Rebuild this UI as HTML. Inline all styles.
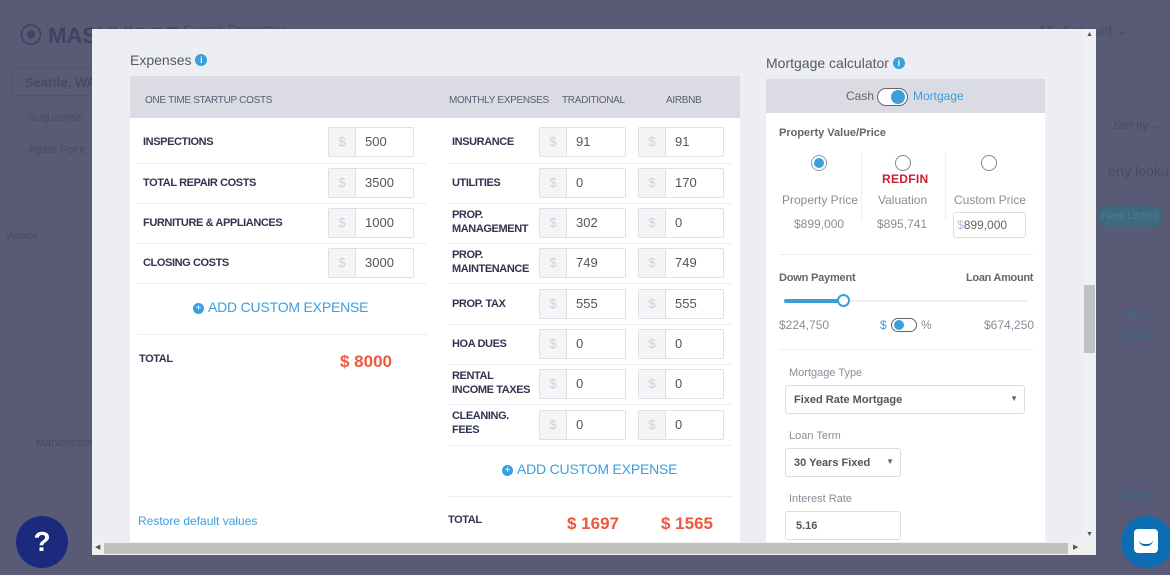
<!DOCTYPE html>
<html><head><meta charset="utf-8"><style>
*{box-sizing:border-box;margin:0;padding:0}
body{width:1170px;height:575px;overflow:hidden;background:#585a76;font-family:"Liberation Sans",sans-serif;position:relative;color:#333}
.a{position:absolute;white-space:nowrap}
.bgt{color:#474a66;font-size:13px}
.modal{left:92px;top:29px;width:1004px;height:526px;background:#edeef3;overflow:hidden}
.lbl{font-size:11px;font-weight:bold;color:#2f3450;letter-spacing:-0.4px;line-height:14px}
.inp{height:30px;border:1px solid #dfe0e5;border-radius:2px;background:#fff;display:flex;font-size:13px;color:#555}
.inp .d{width:27px;background:#f5f5f7;border-right:1px solid #e0e0e4;color:#cfd0d6;text-align:center;line-height:28px}
.inp .v{padding-left:9px;line-height:28px}
.sep{height:1px;background:#eceef2}
.red{color:#f0573f;font-weight:bold;font-size:17px}
.blue{color:#3b9fdc}
.plus{display:inline-block;width:11px;height:11px;border-radius:50%;background:#3b9fdc;color:#fff;font-size:10px;line-height:11px;text-align:center;vertical-align:1px;margin-right:4px}
.info{display:inline-block;width:12px;height:12px;border-radius:50%;background:#3b9fdc;color:#fff;font-size:9px;font-weight:bold;line-height:12px;text-align:center;vertical-align:2px}
.hdr{font-size:10px;color:#5a5e72;letter-spacing:-0.3px}
.g{color:#8a8d99;font-size:12px}
.radio{width:16px;height:16px;border-radius:50%;border:1px solid #888;background:#fff}
</style></head><body>
<div class="a bgt" style="left:20px;top:18px;font-size:22px;font-weight:bold;color:#3f4260">⦿ MASHVISOR</div>
<div class="a bgt" style="left:183px;top:22px">Search Properties</div>
<div class="a bgt" style="left:1040px;top:22px;font-size:14px">My Account ⌄</div>
<div class="a" style="left:12px;top:68px;width:90px;height:28px;border:1px solid #4e5170;border-radius:3px"></div>
<div class="a bgt" style="left:25px;top:75px;font-weight:bold">Seattle, WA</div>
<div class="a bgt" style="left:28px;top:112px;font-size:11px">Suquamish</div>
<div class="a bgt" style="left:28px;top:144px;font-size:11px">Agate Point</div>
<div class="a bgt" style="left:5px;top:230px;font-size:11px">Venice</div>
<div class="a bgt" style="left:36px;top:437px;font-size:11px">Manchester</div>
<div class="a bgt" style="left:1113px;top:119px;font-size:11px">Sort by ⌄</div>
<div class="a bgt" style="left:1108px;top:163px;font-size:14px">erty lookup</div>
<div class="a" style="left:1098px;top:206px;width:64px;height:22px;border-radius:11px;background:#3e6a80;color:#4d7c92;font-size:11px;padding:4px 0 0 4px;overflow:hidden">New Listing</div>
<div class="a bgt" style="left:1118px;top:309px;font-size:11px;color:#3b6d88">2.66%</div>
<div class="a bgt" style="left:1118px;top:331px;font-size:11px;color:#3b6d88">2.69%</div>
<div class="a bgt" style="left:1118px;top:490px;font-size:11px;color:#3b6d88">2.18%</div>

<div class="a modal">
 <div class="a" style="left:38px;top:23px;font-size:14px;color:#555a66">Expenses <span class="info">i</span></div>
 <div class="a" style="left:38px;top:47px;width:610px;height:470px;background:#fff"></div>
 <div class="a" style="left:38px;top:47px;width:610px;height:42px;background:#dadbe3"></div>
 <div class="a hdr" style="left:53px;top:66px">ONE TIME STARTUP COSTS</div>
 <div class="a hdr" style="left:357px;top:66px">MONTHLY EXPENSES</div>
 <div class="a hdr" style="left:470px;top:66px">TRADITIONAL</div>
 <div class="a hdr" style="left:574px;top:66px">AIRBNB</div>
</div>
<div class="a" style="left:0;top:0;width:1170px;height:575px;pointer-events:none">
 <div class="a lbl" style="left:143px;top:135px">INSPECTIONS</div>
 <div class="a lbl" style="left:143px;top:176px">TOTAL REPAIR COSTS</div>
 <div class="a lbl" style="left:143px;top:216px">FURNITURE &amp; APPLIANCES</div>
 <div class="a lbl" style="left:143px;top:256px">CLOSING COSTS</div>
 <div class="a inp" style="left:328px;top:127px;width:86px"><span class="d">$</span><span class="v">500</span></div>
 <div class="a inp" style="left:328px;top:168px;width:86px"><span class="d">$</span><span class="v">3500</span></div>
 <div class="a inp" style="left:328px;top:208px;width:86px"><span class="d">$</span><span class="v">1000</span></div>
 <div class="a inp" style="left:328px;top:248px;width:86px"><span class="d">$</span><span class="v">3000</span></div>
 <div class="a sep" style="left:138px;top:163px;width:289px"></div>
 <div class="a sep" style="left:138px;top:203px;width:289px"></div>
 <div class="a sep" style="left:138px;top:243px;width:289px"></div>
 <div class="a sep" style="left:138px;top:283px;width:289px"></div>
 <div class="a blue" style="left:193px;top:299px;font-size:14px;letter-spacing:-0.2px"><span class="plus">+</span>ADD CUSTOM EXPENSE</div>
 <div class="a sep" style="left:138px;top:334px;width:289px"></div>
 <div class="a lbl" style="left:139px;top:352px">TOTAL</div>
 <div class="a red" style="left:340px;top:352px">$ 8000</div>
 <div class="a blue" style="left:138px;top:514px;font-size:12px">Restore default values</div>
 <div class="a lbl" style="left:452px;top:135px">INSURANCE</div>
 <div class="a lbl" style="left:452px;top:176px">UTILITIES</div>
 <div class="a lbl" style="left:452px;top:208px">PROP.<br>MANAGEMENT</div>
 <div class="a lbl" style="left:452px;top:248px">PROP.<br>MAINTENANCE</div>
 <div class="a lbl" style="left:452px;top:297px">PROP. TAX</div>
 <div class="a lbl" style="left:452px;top:337px">HOA DUES</div>
 <div class="a lbl" style="left:452px;top:369px">RENTAL<br>INCOME TAXES</div>
 <div class="a lbl" style="left:452px;top:409px">CLEANING.<br>FEES</div>
 <div class="a inp" style="left:539px;top:127px;width:87px"><span class="d">$</span><span class="v">91</span></div>
 <div class="a inp" style="left:638px;top:127px;width:86px"><span class="d">$</span><span class="v">91</span></div>
 <div class="a inp" style="left:539px;top:168px;width:87px"><span class="d">$</span><span class="v">0</span></div>
 <div class="a inp" style="left:638px;top:168px;width:86px"><span class="d">$</span><span class="v">170</span></div>
 <div class="a inp" style="left:539px;top:208px;width:87px"><span class="d">$</span><span class="v">302</span></div>
 <div class="a inp" style="left:638px;top:208px;width:86px"><span class="d">$</span><span class="v">0</span></div>
 <div class="a inp" style="left:539px;top:248px;width:87px"><span class="d">$</span><span class="v">749</span></div>
 <div class="a inp" style="left:638px;top:248px;width:86px"><span class="d">$</span><span class="v">749</span></div>
 <div class="a inp" style="left:539px;top:289px;width:87px"><span class="d">$</span><span class="v">555</span></div>
 <div class="a inp" style="left:638px;top:289px;width:86px"><span class="d">$</span><span class="v">555</span></div>
 <div class="a inp" style="left:539px;top:329px;width:87px"><span class="d">$</span><span class="v">0</span></div>
 <div class="a inp" style="left:638px;top:329px;width:86px"><span class="d">$</span><span class="v">0</span></div>
 <div class="a inp" style="left:539px;top:369px;width:87px"><span class="d">$</span><span class="v">0</span></div>
 <div class="a inp" style="left:638px;top:369px;width:86px"><span class="d">$</span><span class="v">0</span></div>
 <div class="a inp" style="left:539px;top:410px;width:87px"><span class="d">$</span><span class="v">0</span></div>
 <div class="a inp" style="left:638px;top:410px;width:86px"><span class="d">$</span><span class="v">0</span></div>
 <div class="a sep" style="left:448px;top:163px;width:284px"></div>
 <div class="a sep" style="left:448px;top:203px;width:284px"></div>
 <div class="a sep" style="left:448px;top:243px;width:284px"></div>
 <div class="a sep" style="left:448px;top:283px;width:284px"></div>
 <div class="a sep" style="left:448px;top:324px;width:284px"></div>
 <div class="a sep" style="left:448px;top:364px;width:284px"></div>
 <div class="a sep" style="left:448px;top:404px;width:284px"></div>
 <div class="a sep" style="left:448px;top:445px;width:284px"></div>
 <div class="a blue" style="left:502px;top:461px;font-size:14px;letter-spacing:-0.2px"><span class="plus">+</span>ADD CUSTOM EXPENSE</div>
 <div class="a sep" style="left:448px;top:496px;width:284px"></div>
 <div class="a lbl" style="left:448px;top:513px">TOTAL</div>
 <div class="a red" style="left:567px;top:514px">$ 1697</div>
 <div class="a red" style="left:661px;top:514px">$ 1565</div>

 <div class="a" style="left:766px;top:55px;font-size:14px;color:#555a66">Mortgage calculator <span class="info">i</span></div>
 <div class="a" style="left:766px;top:79px;width:279px;height:463px;background:#fff"></div>
 <div class="a" style="left:766px;top:79px;width:279px;height:34px;background:#dadbe3"></div>
 <div class="a g" style="left:846px;top:89px;color:#666">Cash</div>
 <div class="a" style="left:877px;top:88px;width:31px;height:18px;border:1.5px solid #666;border-radius:9px;background:#fff"><div style="position:absolute;left:13px;top:1px;width:14px;height:14px;border-radius:50%;background:#3b9fdc"></div></div>
 <div class="a blue" style="left:913px;top:89px;font-size:12px">Mortgage</div>
 <div class="a" style="left:779px;top:127px;font-size:11px;font-weight:bold;color:#666">Property Value/Price</div>
 <div class="a radio" style="left:811px;top:155px;border-color:#999"><div style="margin:2px;width:10px;height:10px;border-radius:50%;background:#3b9fdc"></div></div>
 <div class="a radio" style="left:895px;top:155px"></div>
 <div class="a radio" style="left:981px;top:155px"></div>
 <div class="a" style="left:861px;top:152px;width:1px;height:68px;background:#eee"></div>
 <div class="a" style="left:945px;top:152px;width:1px;height:68px;background:#eee"></div>
 <div class="a" style="left:882px;top:172px;font-size:12px;font-weight:bold;color:#c8202f;letter-spacing:0.3px">REDFIN</div>
 <div class="a g" style="left:782px;top:193px">Property Price</div>
 <div class="a g" style="left:878px;top:193px">Valuation</div>
 <div class="a g" style="left:954px;top:193px">Custom Price</div>
 <div class="a g" style="left:794px;top:217px">$899,000</div>
 <div class="a g" style="left:877px;top:217px">$895,741</div>
 <div class="a" style="left:953px;top:212px;width:73px;height:26px;border:1px solid #ddd;border-radius:3px;font-size:12px;color:#666;padding:5px 0 0 3px"><span style="color:#a9c4e4">$</span>899,000</div>
 <div class="a sep" style="left:779px;top:254px;width:254px"></div>
 <div class="a" style="left:779px;top:272px;font-size:11px;font-weight:bold;color:#666;letter-spacing:-0.2px">Down Payment</div>
 <div class="a" style="left:966px;top:272px;font-size:11px;font-weight:bold;color:#666;letter-spacing:-0.3px">Loan Amount</div>
 <div class="a" style="left:784px;top:300px;width:243px;height:2px;background:#eee"></div>
 <div class="a" style="left:784px;top:299px;width:60px;height:4px;background:#3b9fdc;border-radius:2px"></div>
 <div class="a" style="left:837px;top:294px;width:13px;height:13px;border:2px solid #3b9fdc;border-radius:50%;background:#fff"></div>
 <div class="a g" style="left:779px;top:318px">$224,750</div>
 <div class="a blue" style="left:880px;top:318px;font-size:12px">$</div>
 <div class="a" style="left:891px;top:318px;width:26px;height:14px;border:1.5px solid #666;border-radius:7px"><div style="position:absolute;left:2px;top:1px;width:10px;height:10px;border-radius:50%;background:#3b9fdc"></div></div>
 <div class="a g" style="left:921px;top:318px">%</div>
 <div class="a g" style="left:984px;top:318px">$674,250</div>
 <div class="a sep" style="left:779px;top:349px;width:254px"></div>
 <div class="a g" style="left:789px;top:367px;font-size:11px">Mortgage Type</div>
 <div class="a" style="left:785px;top:385px;width:240px;height:29px;border:1px solid #ddd;border-radius:3px;font-size:11px;font-weight:bold;color:#555;padding:8px 0 0 8px">Fixed Rate Mortgage<span style="position:absolute;right:6px;top:8px;font-size:8px;color:#666">▼</span></div>
 <div class="a g" style="left:789px;top:430px;font-size:11px">Loan Term</div>
 <div class="a" style="left:785px;top:448px;width:116px;height:29px;border:1px solid #ddd;border-radius:3px;font-size:11px;font-weight:bold;color:#555;padding:8px 0 0 8px">30 Years Fixed<span style="position:absolute;right:6px;top:8px;font-size:8px;color:#666">▼</span></div>
 <div class="a g" style="left:789px;top:493px;font-size:11px">Interest Rate</div>
 <div class="a" style="left:785px;top:511px;width:116px;height:29px;border:1px solid #ddd;border-radius:3px;font-size:11px;font-weight:bold;color:#555;padding:8px 0 0 10px">5.16</div>

 <div class="a" style="left:92px;top:542px;width:1004px;height:13px;background:#f0f0f0"></div>
 <div class="a" style="left:104px;top:543px;width:964px;height:11px;background:#c1c1c1"></div>
 <div class="a" style="left:95px;top:543px;font-size:7px;color:#555">◀</div>
 <div class="a" style="left:1073px;top:543px;font-size:7px;color:#555">▶</div>
 <div class="a" style="left:1083px;top:29px;width:13px;height:513px;background:#f0f0f0"></div>
 <div class="a" style="left:1084px;top:285px;width:11px;height:68px;background:#c1c1c1"></div>
 <div class="a" style="left:1086px;top:31px;font-size:7px;color:#555">▲</div>
 <div class="a" style="left:1086px;top:531px;font-size:7px;color:#555">▼</div>

 <div class="a" style="left:16px;top:516px;width:52px;height:52px;border-radius:50%;background:#1c2a7e;color:#fff;font-size:28px;font-weight:bold;text-align:center;line-height:52px">?</div>
 <div class="a" style="left:1121px;top:516px;width:52px;height:52px;border-radius:50%;background:#0c6db3"><div style="position:absolute;left:13px;top:13px;width:24px;height:24px;background:#fff;border-radius:4px"><div style="position:absolute;left:5px;top:11px;width:14px;height:6px;border-bottom:2px solid #0c6db3;border-radius:0 0 8px 8px"></div></div></div>
</div>
</body></html>
